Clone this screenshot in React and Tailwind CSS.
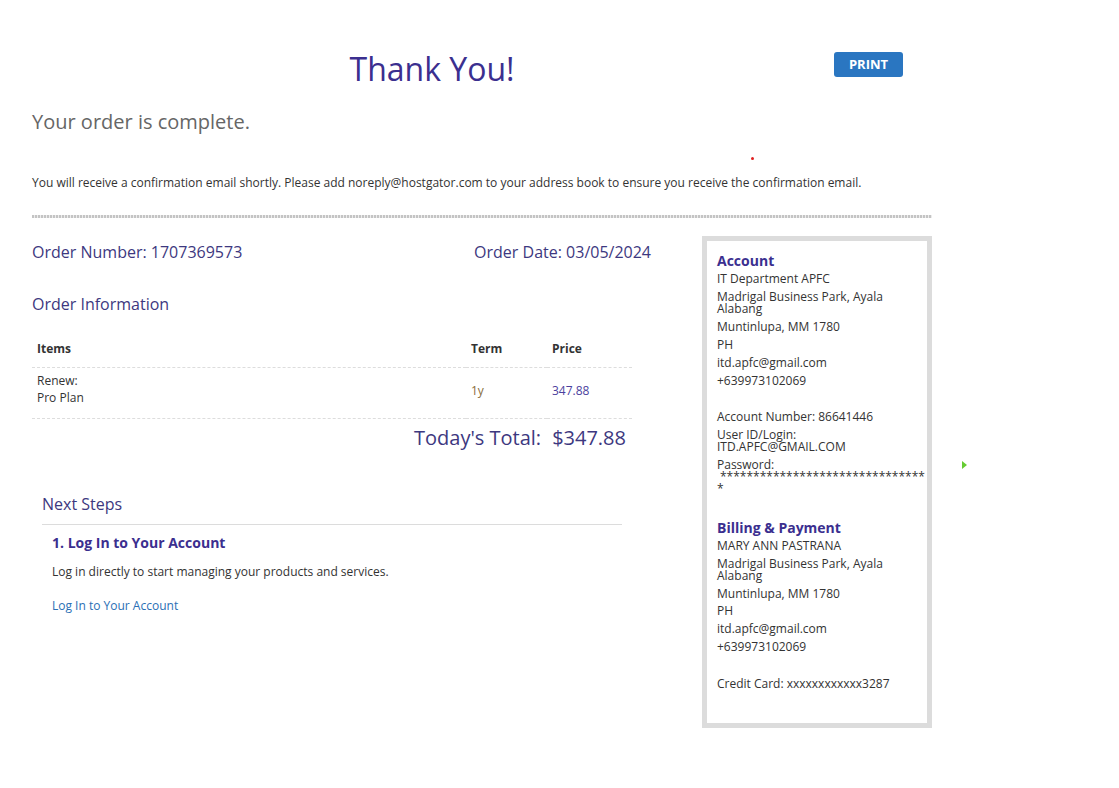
import React from "react";

const stars = "*".repeat(31);

const Line = ({ children, className = "" }) => (
  <div className={`leading-[12px] ${className}`}>{children}</div>
);

const OrderTable = () => (
  <table className="w-[600px] border-collapse text-[12px] text-[#333]">
    <thead>
      <tr className="border-b border-dashed border-[#ddd]">
        <th className="w-[434px] pt-[7px] pb-[9px] pl-[5px] text-left font-bold leading-[18px]">Items</th>
        <th className="w-[81px] pt-[7px] pb-[9px] pl-[5px] text-left font-bold leading-[18px]">Term</th>
        <th className="pt-[7px] pb-[9px] pl-[5px] text-left font-bold leading-[18px]">Price</th>
      </tr>
    </thead>
    <tbody>
      <tr className="border-b border-dashed border-[#ddd]">
        <td className="pt-[4px] pb-[12px] pl-[5px] align-top leading-[17px]">
          Renew:
          <br />
          Pro Plan
        </td>
        <td className="pt-[14px] pl-[5px] align-top leading-[17px] text-[#8a6d3b]">1y</td>
        <td className="pt-[14px] pl-[5px] align-top leading-[17px] text-[#4b3f9e]">347.88</td>
      </tr>
    </tbody>
  </table>
);

const AccountBox = () => (
  <div className="h-[492px] w-[230px] border-[5px] border-[#dcdcdc] px-[10px] pt-[11px] text-[12px] text-[#333]">
    <div className="text-[14px] font-bold leading-[18px] text-[#3b2f8f]">Account</div>
    <Line className="mt-[3px]">IT Department APFC</Line>
    <Line className="mt-[6px]">
      Madrigal Business Park, Ayala
      <br />
      Alabang
    </Line>
    <Line className="mt-[6px]">Muntinlupa, MM 1780</Line>
    <Line className="mt-[6px]">PH</Line>
    <Line className="mt-[6px]">itd.apfc@gmail.com</Line>
    <Line className="mt-[6px]">+639973102069</Line>

    <Line className="mt-[24px]">Account Number: 86641446</Line>
    <Line className="mt-[6px]">
      User ID/Login:
      <br />
      ITD.APFC@GMAIL.COM
    </Line>
    <Line className="mt-[6px]">Password:</Line>
    <Line className="pl-[3px]">{stars}</Line>
    <Line>*</Line>

    <div className="mt-[24px] text-[14px] font-bold leading-[18px] text-[#3b2f8f]">Billing &amp; Payment</div>
    <Line className="mt-[3px]">MARY ANN PASTRANA</Line>
    <Line className="mt-[6px]">
      Madrigal Business Park, Ayala
      <br />
      Alabang
    </Line>
    <Line className="mt-[6px]">Muntinlupa, MM 1780</Line>
    <Line className="mt-[5px]">PH</Line>
    <Line className="mt-[6px]">itd.apfc@gmail.com</Line>
    <Line className="mt-[6px]">+639973102069</Line>

    <Line className="mt-[25px]">Credit Card: xxxxxxxxxxxx3287</Line>
  </div>
);

export default function App() {
  return (
    <div className="relative min-h-[788px] bg-white font-['Open_Sans',sans-serif]">
      {/* stray markers from the original capture */}
      <span className="absolute left-[751px] top-[157px] h-[3px] w-[3px] rounded-full bg-[#e02020]" />
      <span className="absolute left-[962px] top-[461px] h-0 w-0 border-y-[4px] border-l-[5px] border-y-transparent border-l-[#66cc33]" />

      <div className="w-[900px] ml-[32px] pt-[49px]">
        {/* Header */}
        <div className="flex items-start">
          <h1 className="w-[800px] text-center text-[32px] leading-[40px] text-[#3b2f8f]">Thank You!</h1>
          <button className="ml-[2px] mt-[3px] h-[25px] w-[69px] rounded-[3px] bg-[#2a76c1] text-[13px] font-bold text-white">
            PRINT
          </button>
        </div>

        <h2 className="mt-[19px] text-[20px] leading-[28px] text-[#666]">Your order is complete.</h2>

        <p className="mt-[38px] text-[12px] leading-[18px] text-[#333]">
          You will receive a confirmation email shortly. Please add noreply@hostgator.com to your address book to ensure
          you receive the confirmation email.
        </p>

        <div className="mt-[23px] h-[3px] w-[900px] bg-[repeating-linear-gradient(90deg,#c4c4c4_0_2px,#ececec_2px_3px)]" />

        {/* Main */}
        <div className="mt-[18px] flex">
          <div className="w-[620px] pt-[5px]">
            <div className="flex justify-between text-[16px] leading-[22px] text-[#3d3880]">
              <span>Order Number: 1707369573</span>
              <span className="pr-[1px]">Order Date: 03/05/2024</span>
            </div>

            <h3 className="mt-[29px] text-[16px] leading-[24px] text-[#3d3880]">Order Information</h3>

            <div className="mt-[17px]">
              <OrderTable />
            </div>

            <div className="mt-[6px] flex w-[600px] justify-end gap-[11px] pr-[6px] text-[20px] leading-[26px] text-[#3d3880]">
              <span>Today's Total:</span>
              <span>$347.88</span>
            </div>

            {/* Next steps */}
            <div className="ml-[10px] mt-[41px] w-[580px]">
              <h3 className="border-b border-[#dcdcdc] pb-[8px] text-[16px] leading-[24px] text-[#3d3880]">Next Steps</h3>
              <div className="pl-[10px]">
                <h4 className="mt-[9px] text-[14px] font-bold leading-[18px] text-[#3b2f8f]">1. Log In to Your Account</h4>
                <p className="mt-[11px] text-[12px] leading-[18px] text-[#333]">
                  Log in directly to start managing your products and services.
                </p>
                <a href="#" className="mt-[16px] block text-[12px] leading-[18px] text-[#2a6fb5]">
                  Log In to Your Account
                </a>
              </div>
            </div>
          </div>

          <div className="ml-[50px]">
            <AccountBox />
          </div>
        </div>
      </div>
    </div>
  );
}
